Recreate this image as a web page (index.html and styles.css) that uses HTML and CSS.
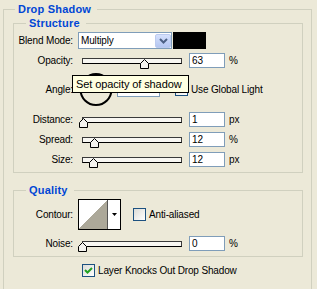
FILE: index.html
```html
<!DOCTYPE html>
<html lang="en">
<head>
    <meta charset="UTF-8">
    <title>Drop Shadow</title>
    <link rel="stylesheet" href="styles.css">
</head>
<body>
    <div class="dialog">
        <div class="group outer">
            <div class="group-title outer-title">Drop Shadow</div>

            <!-- Structure -->
            <div class="group structure">
                <div class="group-title">Structure</div>

                <div class="row blend">
                    <span class="label">Blend Mode:</span>
                    <div class="combo">
                        <span class="combo-text">Multiply</span>
                        <span class="combo-btn">
                            <svg width="9" height="6" viewBox="0 0 9 6"><polyline points="1,1 4.5,4.5 8,1" fill="none" stroke="#4d6185" stroke-width="2"/></svg>
                        </span>
                    </div>
                    <span class="swatch"></span>
                </div>

                <div class="row opacity">
                    <span class="label">Opacity:</span>
                    <div class="slider"><span class="thumb" style="left: calc(63% - 5px)"></span></div>
                    <span class="field">63</span>
                    <span class="unit">%</span>
                </div>

                <div class="row angle">
                    <span class="label">Angle:</span>
                    <svg class="dial" width="34" height="35" viewBox="0 0 34 35">
                        <circle cx="17" cy="17.5" r="15.5" fill="none" stroke="#000" stroke-width="2"/>
                        <line x1="17" y1="17.5" x2="10" y2="5.5" stroke="#000" stroke-width="1"/>
                    </svg>
                    <span class="field wide">120</span>
                    <span class="unit deg">&deg;</span>
                    <span class="check"></span>
                    <span class="check-label">Use Global Light</span>
                </div>

                <div class="row distance">
                    <span class="label">Distance:</span>
                    <div class="slider"><span class="thumb" style="left: calc(1% - 5px)"></span></div>
                    <span class="field">1</span>
                    <span class="unit">px</span>
                </div>

                <div class="row spread">
                    <span class="label">Spread:</span>
                    <div class="slider"><span class="thumb" style="left: calc(12% - 5px)"></span></div>
                    <span class="field">12</span>
                    <span class="unit">%</span>
                </div>

                <div class="row size">
                    <span class="label">Size:</span>
                    <div class="slider"><span class="thumb" style="left: calc(11% - 5px)"></span></div>
                    <span class="field">12</span>
                    <span class="unit">px</span>
                </div>
            </div>

            <!-- Quality -->
            <div class="group quality">
                <div class="group-title">Quality</div>

                <div class="row contour-row">
                    <span class="label">Contour:</span>
                    <div class="contour">
                        <span class="contour-preview"></span>
                        <span class="contour-btn">
                            <svg width="5" height="3" viewBox="0 0 5 3"><polygon points="0,0 5,0 2.5,3" fill="#000"/></svg>
                        </span>
                    </div>
                    <span class="check anti"></span>
                    <span class="check-label">Anti-aliased</span>
                </div>

                <div class="row noise">
                    <span class="label">Noise:</span>
                    <div class="slider"><span class="thumb" style="left: calc(0% - 5px)"></span></div>
                    <span class="field">0</span>
                    <span class="unit">%</span>
                </div>
            </div>

            <div class="row knockout">
                <span class="check">
                    <svg width="11" height="11" viewBox="0 0 11 11"><polyline points="2,5 4.5,7.5 9,3" fill="none" stroke="#21a121" stroke-width="2"/></svg>
                </span>
                <span class="check-label">Layer Knocks Out Drop Shadow</span>
            </div>
        </div>

        <!-- tooltip over the angle row -->
        <div class="tooltip">Set opacity of shadow</div>
    </div>
</body>
</html>
```

FILE: styles.css
```css
* {
    box-sizing: border-box;
}
html, body {
    margin: 0;
    padding: 0;
    overflow: hidden;
    background-color: #ece9d8;
}
body {
    font-family: "Liberation Sans", Arial, sans-serif;
    font-size: 10px;
    letter-spacing: -0.15px;
    color: #000;
}
.dialog {
    position: relative;
    height: 289px;
    overflow: hidden;
    padding: 9px 0 0 3px;
}
.group {
    border: 1px solid #d0d0bf;
}
.group-title {
    width: fit-content;
    height: 13px;
    line-height: 13px;
    margin: -7px 0 0 12px;
    padding: 0 6px 0 3px;
    background-color: #ece9d8;
    color: #0046d5;
    font-size: 11px;
    font-weight: bold;
    letter-spacing: 0.2px;
}
.outer {
    width: 309px;
    height: 281px;
}
.outer-title {
    margin-left: 11px;
}
.structure {
    margin: 7px 8px 0 9px;
    padding-bottom: 5px;
}
.quality {
    margin: 17px 8px 0 9px;
    padding-bottom: 5px;
}
.row {
    display: flex;
    align-items: center;
}
.label {
    width: 59px;
    text-align: right;
}
.blend {
    margin-top: 2px;
    height: 17px;
}
.opacity {
    margin-top: 4px;
}
.angle {
    margin-top: 4px;
    height: 35px;
}
.distance, .spread, .size {
    margin-top: 5px;
}
.contour-row {
    margin-top: 2px;
}
.noise {
    margin-top: 6px;
}
.knockout {
    margin: 7px 0 0 78px;
}

/* combo box */
.combo {
    display: flex;
    align-items: center;
    width: 94px;
    height: 17px;
    margin-left: 5px;
    border: 1px solid #7f9db9;
    background-color: #fff;
}
.combo-text {
    padding-left: 2px;
}
.combo-btn {
    display: flex;
    align-items: center;
    justify-content: center;
    width: 16px;
    height: 14px;
    margin-left: auto;
    border-radius: 2px;
    background: linear-gradient(#d6e1fd, #b4c6f1);
    border: 1px solid #bccbef;
}
.swatch {
    width: 33px;
    height: 17px;
    margin-left: 1px;
    background-color: #000;
}

/* sliders */
.slider {
    position: relative;
    width: 100px;
    height: 6px;
    margin-left: 9px;
    border: 1px solid #3a3a3a;
    border-bottom-color: #000;
    background-color: #f8f7f2;
}
.thumb {
    position: absolute;
    top: 0;
    width: 9px;
    height: 10px;
    background: url("data:image/svg+xml;utf8,<svg xmlns='http://www.w3.org/2000/svg' width='9' height='10'><polygon points='0.5,9.5 0.5,4.5 4.5,0.5 8.5,4.5 8.5,9.5' fill='%23f4f3ee' stroke='%23000'/></svg>") no-repeat;
}
.field {
    width: 36px;
    height: 15px;
    line-height: 13px;
    margin-left: 7px;
    padding-left: 2px;
    border: 1px solid #7f9db9;
    background-color: #fff;
}
.field.wide {
    width: 43px;
    margin-left: 4px;
}
.unit {
    margin-left: 4px;
}
.unit.deg {
    width: 14px;
    margin-left: 1px;
}
.dial {
    margin-left: 6px;
}

/* checkboxes */
.check {
    display: flex;
    align-items: center;
    justify-content: center;
    width: 13px;
    height: 13px;
    border: 1px solid #1c5180;
    background: linear-gradient(135deg, #dcdcd7, #fff);
}
.check.anti {
    margin-left: 12px;
}
.check-label {
    margin-left: 3px;
}

/* contour picker */
.contour {
    display: flex;
    width: 43px;
    height: 31px;
    margin-left: 5px;
    border: 1px solid #000;
    background-color: #fff;
}
.contour-preview {
    width: 29px;
    border-right: 1px solid #555;
    background: linear-gradient(to bottom right, #fff 50%, #aca899 50%);
}
.contour-btn {
    display: flex;
    align-items: center;
    justify-content: center;
    flex: 1;
}

.tooltip {
    position: absolute;
    left: 72px;
    top: 75px;
    width: 117px;
    height: 18px;
    line-height: 16px;
    padding-left: 3px;
    border: 1px solid #000;
    background-color: #ffffe1;
    font-size: 11px;
    letter-spacing: -0.1px;
}
```
